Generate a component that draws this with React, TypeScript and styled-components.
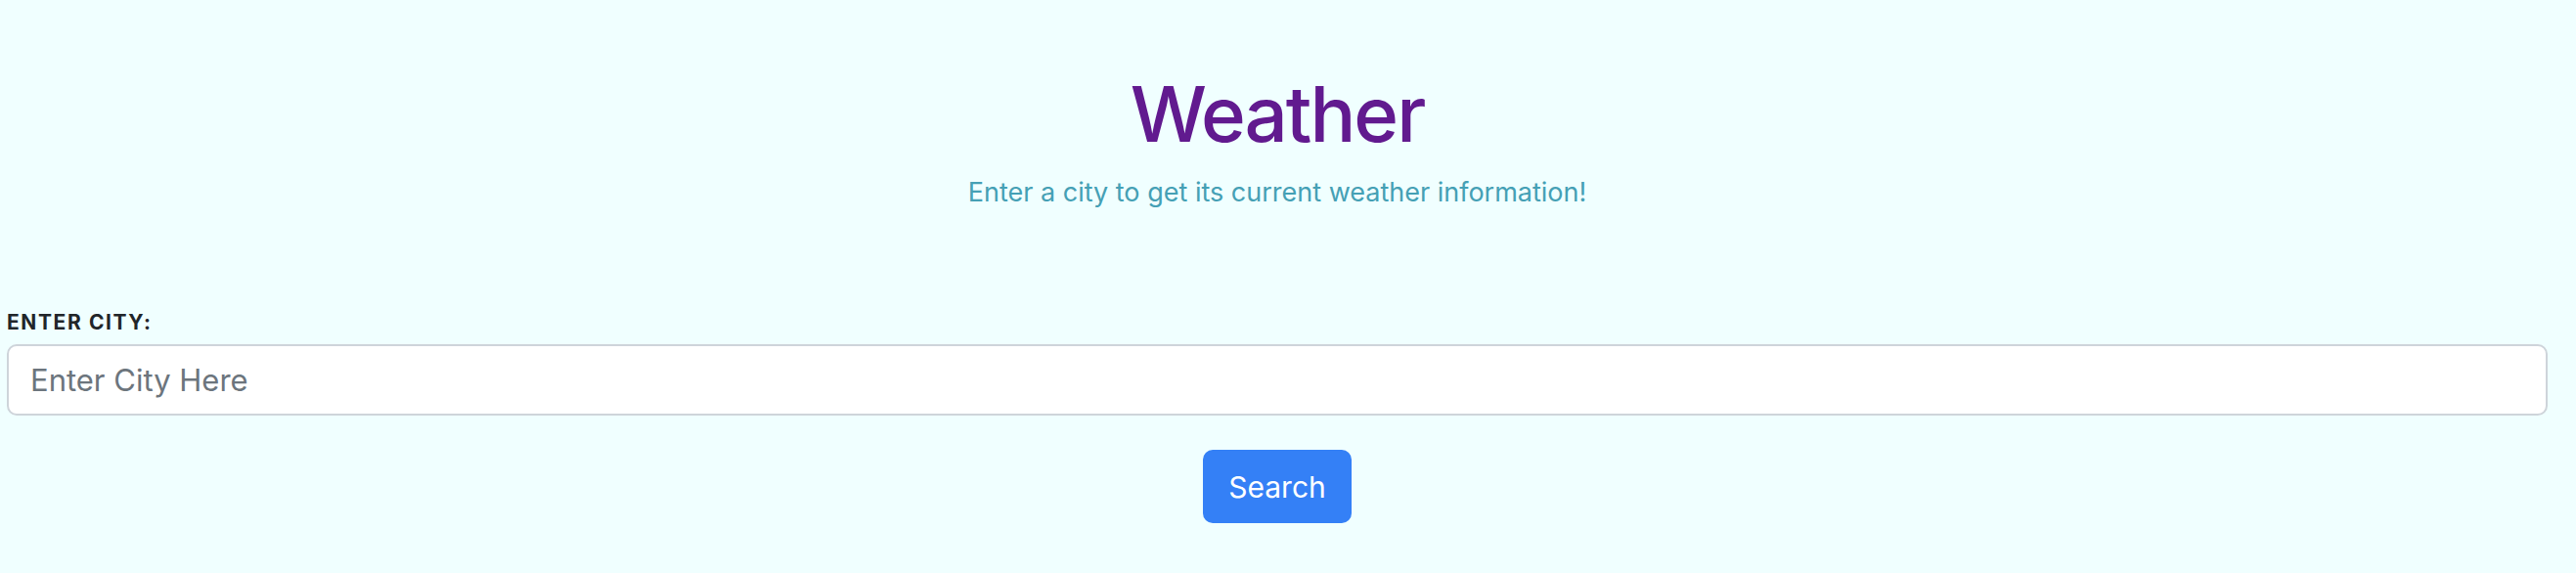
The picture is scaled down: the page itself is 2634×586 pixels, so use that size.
import styled, { createGlobalStyle } from 'styled-components'

const GlobalStyle = createGlobalStyle`
	html, body {
		margin: 0;
		padding: 0;
		background: #f0ffff;
		font-family: Inter, "Noto Sans", sans-serif;
	}
`

const Page = styled.div`
	min-height: 586px;
	padding: 69px 29px 0 7px;
	box-sizing: border-box;
`

const Header = styled.header`
	display: flex;
	flex-direction: column;
	align-items: center;
`

const Title = styled.h1`
	margin: 0;
	font-size: 78px;
	line-height: 96px;
	font-weight: 500;
	letter-spacing: -2px;
	color: #611a8f;
`

const Subtitle = styled.p`
	margin: 13px 0 0;
	font-size: 27px;
	line-height: 38px;
	color: #45a0b5;
`

const Form = styled.form`
	display: flex;
	flex-direction: column;
	margin-top: 99px;
`

const Label = styled.label`
	font-size: 21px;
	line-height: 30px;
	font-weight: 700;
	letter-spacing: 1.6px;
	color: #212529;
	text-transform: uppercase;
`

const Input = styled.input`
	margin-top: 7px;
	height: 73px;
	box-sizing: border-box;
	padding: 0 22px;
	font-family: inherit;
	font-size: 31px;
	color: #212529;
	background: #fff;
	border: 2px solid #ced4da;
	border-radius: 10px;
	outline: none;

	&::placeholder {
		color: #6c757d;
	}
`

const Actions = styled.div`
	display: flex;
	justify-content: center;
	margin-top: 35px;
`

const Button = styled.button`
	width: 152px;
	height: 75px;
	font-family: inherit;
	font-size: 30px;
	color: #fff;
	background: #3480f6;
	border: none;
	border-radius: 10px;
	cursor: pointer;
`

const App = () => {
	return (
		<>
			<GlobalStyle />
			<Page>
				<Header>
					<Title>Weather</Title>
					<Subtitle>Enter a city to get its current weather information!</Subtitle>
				</Header>
				<Form onSubmit={(e) => e.preventDefault()}>
					<Label htmlFor='city'>Enter City:</Label>
					<Input id='city' type='text' placeholder='Enter City Here' />
					<Actions>
						<Button type='submit'>Search</Button>
					</Actions>
				</Form>
			</Page>
		</>
	)
}

export default App
